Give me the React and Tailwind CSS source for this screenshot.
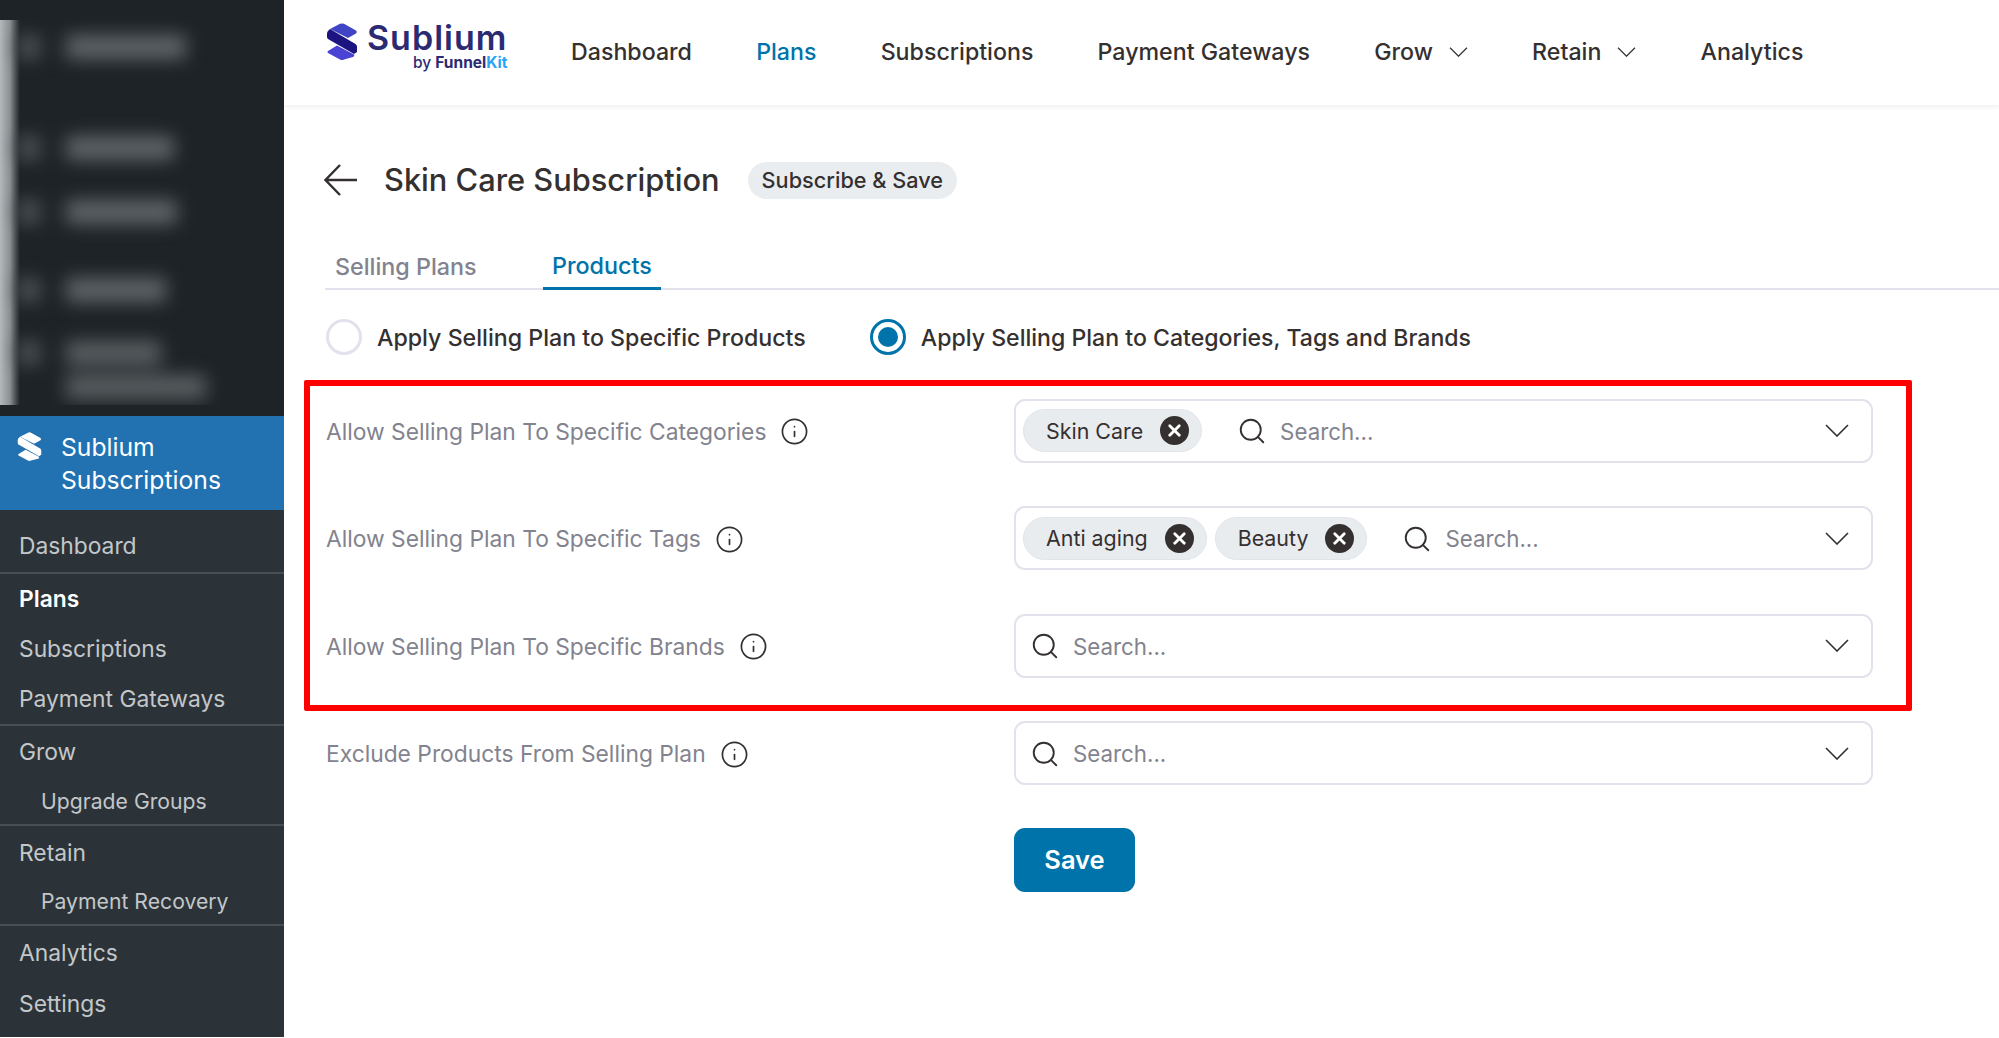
import { Info, Search, X } from "lucide-react";

const LogoMark = ({ className, top, bottom, dark }) => (
  <svg viewBox="0 0 30 37" className={className}>
    <path d="M13 .8 Q15 0 17 .8 L29 7.5 Q30.5 9 29 10.5 L21 15 L3 6 Z" fill={top} />
    <path d="M3 6 L28.5 21 Q30 22 30 24 V29 L27 31 L1 16 Q0 15 0 14 V11 Q0 9 1 8 Z" fill={dark} />
    <path d="M1 28 L10 22.5 L27 31.5 Q28 33 26 34 L17 36.5 Q15 37.5 13 36.5 L1 30 Q0 29 1 28 Z" fill={bottom} />
  </svg>
);

const Chevron = ({ className }) => (
  <svg viewBox="0 0 24 13" fill="none" stroke="currentColor" strokeWidth="1.6" className={className}>
    <path d="M1 1 L12 12 L23 1" />
  </svg>
);

const sideGroups = [
  [{ label: "Dashboard", h: "h-[62px] pt-[10px]" }],
  [
    { label: "Plans", h: "h-[50px]", active: true },
    { label: "Subscriptions", h: "h-[50px]" },
    { label: "Payment Gateways", h: "h-[50px]" },
  ],
  [
    { label: "Grow", h: "h-[53px]" },
    { label: "Upgrade Groups", h: "h-[45px]", sub: true },
  ],
  [
    { label: "Retain", h: "h-[54px]" },
    { label: "Payment Recovery", h: "h-[44px]", sub: true },
  ],
  [
    { label: "Analytics", h: "h-[54px]" },
    { label: "Settings", h: "h-[48px]" },
  ],
];

const blurred = [
  { top: "mt-[15px]", bar: "w-[120px]" },
  { top: "mt-[77px]", bar: "w-[108px]" },
  { top: "mt-[40px]", bar: "w-[111px]" },
  { top: "mt-[54px]", bar: "w-[100px]" },
];

const Sidebar = () => (
  <aside className="w-[284px] h-[1037px] shrink-0 bg-[#2c3338] flex flex-col">
    <div className="h-[416px] bg-[#1d2327] pt-[20px]">
      <div className="relative h-[385px] overflow-hidden">
        <div className="absolute left-0 top-0 h-full w-[20px] bg-gradient-to-r from-[#b4b9bb] via-[#8b9093] to-[#1d2327]"></div>
        <div className="pl-[18px] flex flex-col blur-[9px]">
          {blurred.map((b) => (
            <div key={b.bar} className={`${b.top} flex items-center gap-[26px]`}>
              <div className="w-[22px] h-[24px] bg-[#4c5155]"></div>
              <div className={`${b.bar} h-[24px] bg-[#5f6468]`}></div>
            </div>
          ))}
          <div className="mt-[39px] flex gap-[26px]">
            <div className="w-[22px] h-[24px] bg-[#4c5155]"></div>
            <div className="flex flex-col gap-[10px]">
              <div className="w-[95px] h-[24px] bg-[#595e61]"></div>
              <div className="w-[140px] h-[24px] bg-[#595e61]"></div>
            </div>
          </div>
        </div>
      </div>
    </div>
    <div className="h-[94px] bg-[#2271b1] flex pl-[17px] pt-[15px] gap-[19px]">
      <LogoMark className="w-[25px] h-[29px] mt-[1px]" top="#fff" bottom="#fff" dark="#fff" />
      <div className="text-white text-[24.7px] leading-[33px]">
        Sublium
        <br />
        Subscriptions
      </div>
    </div>
    <div className="flex flex-col text-[22.8px] text-[#c3c7ca]">
      {sideGroups.map((group, i) => (
        <div key={i} className={i < sideGroups.length - 1 ? "border-b-[2px] border-[#484e53]" : ""}>
          {group.map((item) => (
            <div
              key={item.label}
              className={`${item.h} flex items-center ${item.sub ? "pl-[41px] text-[21.2px]" : "pl-[19px]"} ${item.active ? "text-white font-semibold" : ""}`}
            >
              {item.label}
            </div>
          ))}
        </div>
      ))}
    </div>
  </aside>
);

const TopNav = () => (
  <header className="h-[105px] bg-white shadow-[0_2px_5px_rgba(0,0,0,0.07)] flex items-center shrink-0">
    <div className="ml-[43px] w-[181px] self-start pt-[20px] flex gap-[10px] shrink-0">
      <LogoMark className="w-[30px] h-[37px] mt-[3px]" top="#3f45c4" bottom="#4a43d6" dark="#1c1480" />
      <div className="flex flex-col items-end">
        <span className="text-[34px] font-semibold text-[#2b2a72] leading-[35px] tracking-[1px]">Sublium</span>
        <span className="text-[15.5px] text-[#2b2a72] leading-[16px] font-medium">
          by <span className="font-bold">Funnel</span>
          <span className="font-bold text-[#29a5f5]">Kit</span>
        </span>
      </div>
    </div>
    <nav className="ml-[63px] flex items-center gap-[64.2px] text-[23.2px] font-medium text-[#353030]">
      <span>Dashboard</span>
      <span className="text-[#0073aa]">Plans</span>
      <span>Subscriptions</span>
      <span>Payment Gateways</span>
      <span className="flex items-center gap-[16px]">
        Grow <Chevron className="w-[19px] h-[10px]" />
      </span>
      <span className="flex items-center gap-[16px]">
        Retain <Chevron className="w-[19px] h-[10px]" />
      </span>
      <span>Analytics</span>
    </nav>
  </header>
);

const Tag = ({ label }) => (
  <span className="h-[43px] pl-[22px] pr-[12px] flex items-center gap-[17px] rounded-full bg-[#e9ecef] border border-[#e2e4ea] text-[21.4px] text-[#353030]">
    {label}
    <span className="w-[29px] h-[29px] rounded-full bg-[#353030] flex items-center justify-center">
      <X size={19} strokeWidth={3.5} className="text-white" />
    </span>
  </span>
);

const FormRow = ({ label, tags = [] }) => (
  <div className="flex items-center h-[64px]">
    <div className="w-[688px] pt-[2px] flex items-center gap-[14px] text-[22.8px] text-[#82838e]">
      {label}
      <Info size={29} strokeWidth={1.4} className="text-[#353030]" />
    </div>
    <div className="w-[859px] h-[64px] border-2 border-[#e2e2ed] rounded-[11px] flex items-center pl-[7px] pr-[22px] gap-[8px]">
      {tags.map((t) => (
        <Tag key={t} label={t} />
      ))}
      <div className={`${tags.length ? "ml-[27px]" : "ml-[7px]"} pt-[1px] flex items-center gap-[13px] text-[22.3px] text-[#82838e] flex-1`}>
        <Search size={30} strokeWidth={1.5} className="text-[#353030]" />
        Search...
      </div>
      <Chevron className="w-[24px] h-[13px] text-[#353030]" />
    </div>
  </div>
);

const App = () => (
  <div className="w-[1999px] h-[1038px] flex overflow-hidden bg-white font-['Inter',sans-serif]">
    <Sidebar />
    <main className="relative flex-1 flex flex-col">
      <TopNav />
      <div className="flex items-center mt-[55px] pl-[40px] h-[40px]">
        <svg viewBox="0 0 34 32" fill="none" stroke="#353030" strokeWidth="2.4" className="w-[34px] h-[32px]">
          <path d="M33 16 H2 M16 1 L1.5 16 L16 31" />
        </svg>
        <h1 className="ml-[26px] text-[30.8px] font-medium text-[#353030]">Skin Care Subscription</h1>
        <span className="ml-[28px] h-[37px] px-[14px] rounded-full bg-[#eaedf0] flex items-center text-[21.7px] font-medium text-[#353030]">
          Subscribe &amp; Save
        </span>
      </div>
      <div className="mt-[43px] ml-[41px] h-[47px] flex border-b-2 border-[#e2e2ed]">
        <div className="px-[10px] pt-[2px] h-[47px] flex items-center text-[23.3px] font-medium text-[#82838e] w-[218px]">Selling Plans</div>
        <div className="px-[9px] pt-[2px] h-[47px] flex items-center text-[23.3px] font-medium text-[#0073aa] border-b-[3px] border-[#0073aa]">Products</div>
      </div>
      <div className="mt-[29px] ml-[42px] flex items-center text-[23.2px] font-medium text-[#353030]">
        <span className="w-[36px] h-[36px] rounded-full border-[3px] border-[#e2e2ed]"></span>
        <span className="ml-[15px] pt-[2px]">Apply Selling Plan to Specific Products</span>
        <span className="ml-[64px] w-[36px] h-[36px] rounded-full border-[3px] border-[#0073aa] flex items-center justify-center">
          <span className="w-[20px] h-[20px] rounded-full bg-[#0073aa]"></span>
        </span>
        <span className="ml-[15px] pt-[2px] text-[23.1px]">Apply Selling Plan to Categories, Tags and Brands</span>
      </div>
      <div className="mt-[43px] ml-[42px] flex flex-col gap-[43.5px]">
        <FormRow label="Allow Selling Plan To Specific Categories" tags={["Skin Care"]} />
        <FormRow label="Allow Selling Plan To Specific Tags" tags={["Anti aging", "Beauty"]} />
        <FormRow label="Allow Selling Plan To Specific Brands" />
        <FormRow label="Exclude Products From Selling Plan" />
      </div>
      <button className="mt-[43px] ml-[730px] w-[121px] h-[64px] rounded-[11px] bg-[#0073aa] text-white text-[25.5px] font-semibold">
        Save
      </button>
      <div className="absolute left-[20px] top-[380px] w-[1608px] h-[331px] border-[6px] border-[#ff0000] rounded-[2px]"></div>
    </main>
  </div>
);

export default App;
